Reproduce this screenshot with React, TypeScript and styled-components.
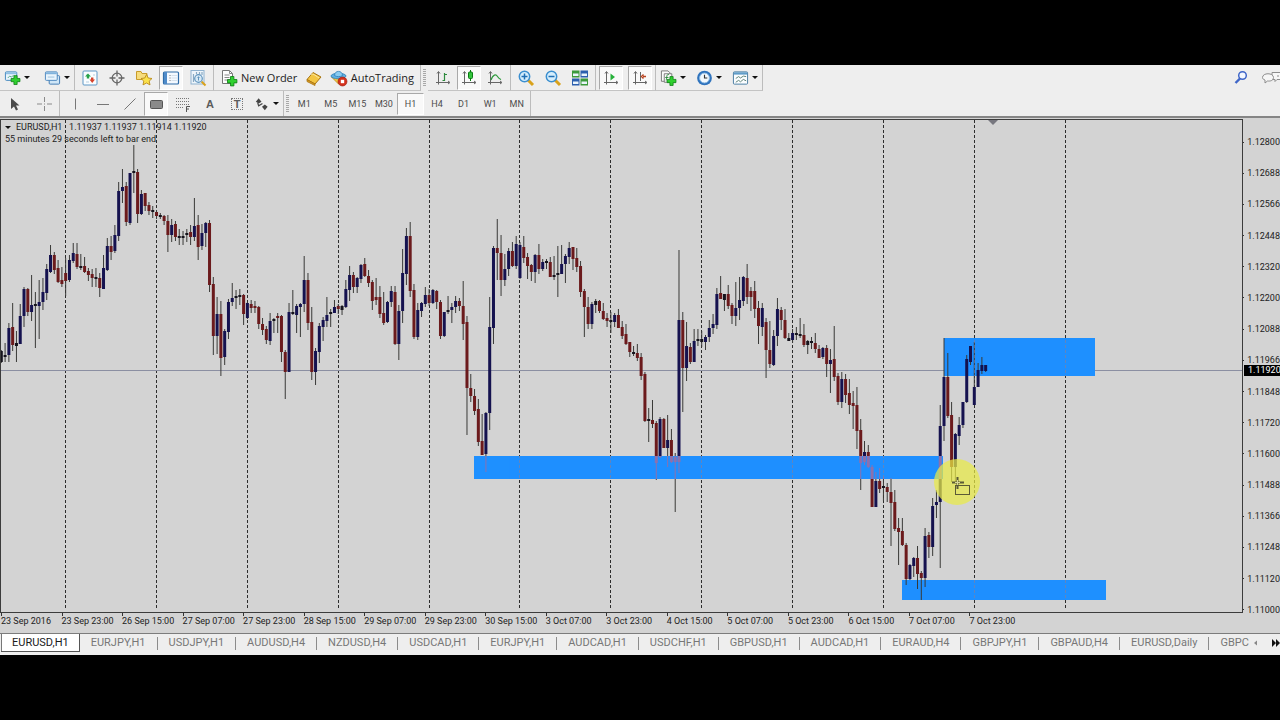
import React from "react";
import styled, { createGlobalStyle } from "styled-components";

const GlobalStyle = createGlobalStyle`
  * { box-sizing: border-box; }
  body { margin: 0; background: #000; font-family: Roboto, "Liberation Sans", sans-serif; }
  button { font-family: inherit; }
  ul, ol, p { margin: 0; padding: 0; list-style: none; }
`;

/* ---------- layout ---------- */

const Page = styled.main`
  display: flex;
  flex-direction: column;
  justify-content: center;
  min-height: 100vh;
  background: #000;
`;

const Terminal = styled.div`
  background: #eeeeee;
  overflow: hidden;
`;

const ToolRow = styled.div<{ $height: number }>`
  display: flex;
  align-items: stretch;
  height: ${(p) => p.$height}px;
`;

const Group = styled.div<{ $width: number; $underline?: boolean }>`
  display: flex;
  flex: none;
  align-items: center;
  justify-content: space-between;
  width: ${(p) => p.$width}px;
  padding: 0 3px;
  border-right: 1px solid #bcbcbc;
  border-bottom: ${(p) => (p.$underline ? "1px solid #c4c4c4" : "none")};
`;

const Grip = styled.span`
  flex: none;
  width: 3px;
  margin: 4px 2px;
  background: repeating-linear-gradient(#a8a8a8 0 1px, transparent 1px 2px);
`;

const ToolButton = styled.button<{ $active?: boolean; $wide?: boolean }>`
  display: flex;
  align-items: center;
  justify-content: center;
  gap: 3px;
  width: ${(p) => (p.$wide ? 28 : 24)}px;
  height: 24px;
  padding: 0;
  border: 1px solid;
  border-color: ${(p) => (p.$active ? "#a9a9a9 #fff #fff #a9a9a9" : "transparent")};
  background: ${(p) => (p.$active ? "#f9f9f9" : "transparent")};
`;

const LabelButton = styled.button`
  display: flex;
  align-items: center;
  gap: 3px;
  height: 24px;
  padding: 0 3px;
  border: 0;
  background: transparent;
  color: #1c1c1c;
  font: 11px "Open Sans", "Noto Sans", sans-serif;
  white-space: nowrap;
`;

const Caret = styled.span`
  border: 3px solid transparent;
  border-top-color: #111;
  border-bottom: 0;
`;

const Frames = styled.div`
  display: grid;
  grid-template-columns: repeat(9, 1fr);
  align-items: center;
  width: 240px;
  border-right: 1px solid #bcbcbc;
`;

const FrameButton = styled.button<{ $active?: boolean }>`
  height: 22px;
  padding: 0;
  border: 1px solid;
  border-color: ${(p) => (p.$active ? "#a9a9a9 #fff #fff #a9a9a9" : "transparent")};
  background: ${(p) => (p.$active ? "#f9f9f9" : "transparent")};
  color: #4c4c4c;
  font-size: 9px;
`;

const Corner = styled.div`
  display: flex;
  align-items: center;
  gap: 10px;
  margin: 0 -10px 0 auto;
`;

const CornerButton = styled.button`
  display: flex;
  padding: 0;
  border: 0;
  background: transparent;
`;

const ChartPane = styled.section`
  display: grid;
  grid-template-columns: minmax(0, 1fr) 37px;
  grid-template-rows: auto 20px;
  padding-top: 1px;
  border-top: 2px solid #858585;
  background: #d3d3d3;
`;

const Plot = styled.div`
  position: relative;
  border: 1px solid #3c3c3c;
`;

const Drawing = styled.svg`
  display: block;
  width: 100%;
  height: 492px;
`;

const Legend = styled.div`
  position: absolute;
  top: 1px;
  left: 4px;
  color: #222;
  font-size: 9px;
  line-height: 12px;
  white-space: pre;
`;

const LegendTitle = styled.p`
  display: flex;
  align-items: center;
  gap: 5px;
`;

const PriceAxis = styled.ol`
  position: relative;
  grid-row: 1 / 3;
  grid-column: 2;
  display: flex;
  flex-direction: column;
  justify-content: space-between;
  padding: 17px 0 17px;
  overflow: hidden;
`;

const Price = styled.li`
  display: flex;
  align-items: center;
  gap: 3px;
  height: 12px;
  color: #222;
  font-size: 9px;
  white-space: nowrap;
  &::before { content: ""; width: 2px; height: 1px; background: #333; }
`;

const Bid = styled.li`
  position: absolute;
  top: 246px;
  left: 1px;
  width: 36px;
  height: 11px;
  padding-left: 4px;
  background: #000;
  color: #fff;
  font-size: 9px;
  line-height: 11px;
`;

const TimeAxis = styled.ol`
  display: grid;
  grid-template-columns: repeat(17, 1fr);
  width: 1030px;
  padding-left: 1px;
`;

const Time = styled.li`
  color: #222;
  font-size: 9px;
  line-height: 11px;
  white-space: nowrap;
  &::before { content: ""; display: block; width: 1px; height: 3px; background: #333; }
`;

const TabStrip = styled.nav`
  display: flex;
  height: 22px;
  padding-left: 1px;
  border-top: 1px solid #7c7c7c;
`;

const TabList = styled.div`
  display: flex;
  flex: 1;
  min-width: 0;
  overflow: hidden;
`;

const Tab = styled.button<{ $active?: boolean }>`
  flex: none;
  height: 18px;
  padding: 0 11px;
  border: 0;
  background: ${(p) => (p.$active ? "#fff" : "transparent")};
  box-shadow: ${(p) => (p.$active ? "inset -1px -1px 0 #555, inset 1px 0 0 #777" : "none")};
  color: ${(p) => (p.$active ? "#1a1a1a" : "#777")};
  font-size: 11px;
  line-height: 18px;
`;

const Divider = styled.span`
  flex: none;
  width: 1px;
  height: 13px;
  margin-top: 3px;
  background: #8c8c8c;
`;

const TabScroll = styled.div`
  display: flex;
  flex: none;
  align-items: flex-start;
  justify-content: space-between;
  width: 30px;
  padding: 5px 0 0 3px;
`;

const ScrollButton = styled.button`
  display: flex;
  padding: 0;
  border: 0;
  background: transparent;
`;

/* ---------- icons ---------- */

const Plus = ({ x = 8, y = 8 }: { x?: number; y?: number }) => (
  <path
    transform={`translate(${x} ${y})`}
    d="M3 0h3.400v3h3v3.400H6.400v3H3v-3H0V3h3z"
    fill="#2fd02f"
    stroke="#0b7a12"
    strokeWidth=".8"
  />
);

const Axes = () => (
  <path d="M4.500 3v12.500M2 13.500h13.500M3 4.500l1.500-2 1.500 2M14 12l2 1.500-2 1.500" stroke="#666" fill="none" />
);

const Lens = ({ plus }: { plus?: boolean }) => (
  <>
    <path d="M11 11l5 5" stroke="#d9a21c" strokeWidth="3" />
    <circle cx="7.500" cy="7.500" r="5.200" fill="#d6eefc" stroke="#3b8fd0" strokeWidth="1.500" />
    <path d={plus ? "M4.500 7.500h6M7.500 4.500v6" : "M4.500 7.500h6"} stroke="#1f6fb5" strokeWidth="1.500" />
  </>
);

const glyphs: Record<string, React.ReactNode> = {
  newChart: (
    <>
      <rect x="1.500" y="2.500" width="12" height="9" rx="1" fill="#e9f4fc" stroke="#3f86bd" />
      <path d="M2 4h11" stroke="#8fc0e4" strokeWidth="2" />
      <path d="M4 9l2-2 2 1 2-2" stroke="#5a8" fill="none" />
      <Plus x={7.500} y={6.500} />
    </>
  ),
  profiles: (
    <>
      <rect x="5.500" y="6.500" width="11" height="9" rx="1" fill="#cfe6f7" stroke="#3f78b0" />
      <rect x="1.500" y="2.500" width="12.500" height="9" rx="1" fill="#e9f4fc" stroke="#4a86bd" />
      <path d="M2 4h11.500" stroke="#7fb2dc" strokeWidth="2" />
      <path d="M4 8h7" stroke="#9bbfdc" />
    </>
  ),
  market: (
    <>
      <rect x="2" y="2" width="14" height="14" rx="1" fill="#fafdff" stroke="#5d97c6" />
      <path d="M5 6h2M12 6h2M5 13h3" stroke="#b7cfe0" />
      <path d="M4 7.500L7 4.500l3 3H8.200V9.500H5.800V7.500z" fill="#27a34a" />
      <path d="M8.500 10.500h1.500V8.500h2.400v2h1.600L11.200 14z" fill="#d6422b" />
    </>
  ),
  target: (
    <g stroke="#666" fill="none" strokeWidth="1.300">
      <circle cx="9" cy="9" r="4.800" />
      <path d="M9 1.500v6M9 10.500v6M1.500 9h6M10.500 9h6" />
    </g>
  ),
  favourites: (
    <>
      <path d="M1.500 2.500h4.500l1 2h5v6h-10.500z" fill="#f6dc7c" stroke="#c89b2a" />
      <path
        d="M11.500 5.500l1.700 3.500 3.800.5-2.800 2.600.8 3.800-3.500-1.900-3.500 1.900.8-3.800-2.800-2.600 3.800-.5z"
        fill="#fbe14b"
        stroke="#b98a1b"
        strokeWidth=".9"
      />
    </>
  ),
  navigator: (
    <>
      <rect x="1.500" y="3" width="15" height="12" rx="1" fill="#f4f9ff" stroke="#2f6ca8" strokeWidth="1.200" />
      <path d="M2 3h3v12H2z" fill="#4f8bc9" />
      <path d="M7.500 6.500h1M7.500 9h1M7.500 11.500h1" stroke="#777" />
      <path d="M9.500 6.500h6M9.500 9h6M9.500 11.500h6" stroke="#d6e1ec" />
    </>
  ),
  tester: (
    <>
      <rect x="2" y="1.500" width="13" height="13.500" fill="#eef5fb" stroke="#8fb2cf" />
      <path d="M4.500 13V5M7.500 5V3M10.500 5V3M13 6V3" stroke="#8aa9c2" strokeWidth="1.200" />
      <path d="M12.500 12.500l4 4" stroke="#d9a21c" strokeWidth="2" />
      <circle cx="9.500" cy="9.500" r="3.800" fill="#d8eaf6" stroke="#5f93bd" strokeWidth="1.200" />
      <path d="M9.500 7.500v4M8.500 8.500h2" stroke="#5f93bd" />
    </>
  ),
  order: (
    <>
      <path d="M2.500 1.500h7l3 3v10h-10z" fill="#fdfdfd" stroke="#777" />
      <path d="M9.500 1.500v3h3M4.500 6h5M4.500 8.500h5M4.500 11h4" stroke="#888" fill="none" />
      <Plus x={7.500} y={7.500} />
    </>
  ),
  editor: (
    <>
      <path d="M2 10.500l6-7 8 4.500-6 7z" fill="#f3c542" stroke="#a87412" />
      <path d="M2 10.500l8 4.500v1.500L2 12.500z" fill="#d89c22" stroke="#a87412" strokeWidth=".8" />
      <path d="M6 5.500c2-1 3 0 8 3.500" stroke="#fbe9a6" fill="none" />
    </>
  ),
  auto: (
    <>
      <path d="M1.500 8l7 7 6-4V7z" fill="#f2c744" stroke="#b98a1b" strokeWidth=".8" />
      <ellipse cx="8.500" cy="7" rx="7.500" ry="2.800" fill="#5fb0e2" stroke="#2f7fb8" strokeWidth=".8" />
      <path d="M4.500 6.500c0-5.500 8-5.500 8 0-2 1.500-6 1.500-8 0z" fill="#8acbf0" stroke="#2f7fb8" strokeWidth=".8" />
      <circle cx="12.500" cy="12.500" r="4.500" fill="#d3301c" stroke="#9b1d10" strokeWidth=".6" />
      <rect x="10.800" y="10.800" width="3.400" height="3.400" fill="#fff" />
    </>
  ),
  bars: (
    <>
      <Axes />
      <path d="M10.500 4v8M8.500 11.500h2M10.500 5.500h2.500" stroke="#2d8a3c" fill="none" strokeWidth="1.200" />
    </>
  ),
  candles: (
    <>
      <Axes />
      <path d="M10.500 1v11" stroke="#0b7a12" />
      <rect x="8.500" y="3" width="4" height="6.500" rx="1" fill="#32c53c" stroke="#0b7a12" />
    </>
  ),
  line: (
    <>
      <Axes />
      <path d="M5 11c2-6 5-6 6.500-3.500S14 10 15 10.500" stroke="#2d9a3c" fill="none" strokeWidth="1.200" />
    </>
  ),
  zoomIn: <Lens plus />,
  zoomOut: <Lens />,
  tile: (
    <>
      <rect x="1" y="1.500" width="7.500" height="7" fill="#3c9a3c" />
      <rect x="9.500" y="1.500" width="7.500" height="7" fill="#2c5fae" />
      <rect x="1" y="9.500" width="7.500" height="7" fill="#2c5fae" />
      <rect x="9.500" y="9.500" width="7.500" height="7" fill="#3c9a3c" />
      <path d="M2 5.800h5.500M10.500 5.800h5.500M2 13.800h5.500M10.500 13.800h5.500" stroke="#eaf4fb" strokeWidth="2.600" />
    </>
  ),
  scroll: (
    <>
      <Axes />
      <path d="M8.500 4.500l4.500 3.500-4.500 3.500z" fill="#27b13a" />
    </>
  ),
  shift: (
    <>
      <Axes />
      <path d="M9.500 3v9" stroke="#666" />
      <path d="M15 7.500h-3M12.500 5.500l-2 2 2 2" stroke="#b8431f" fill="none" strokeWidth="1.400" />
    </>
  ),
  indicators: (
    <>
      <path d="M1.500 1.500h7l2 2v9h-9z" fill="#fafafa" stroke="#777" />
      <path d="M4.500 4.500h8v9h-8z" fill="#fafafa" stroke="#777" />
      <path d="M9.500 5.500c-3-1-2 3-3 6M5.500 8.500h3.500" stroke="#2d8a3c" fill="none" />
      <Plus x={7.500} y={7.500} />
    </>
  ),
  clock: (
    <>
      <circle cx="9" cy="9" r="7.800" fill="#2f73bd" />
      <circle cx="9" cy="9" r="5.200" fill="#f2f8fd" stroke="#8dbbe4" />
      <path d="M9 5.500V9h3" stroke="#333" fill="none" strokeWidth="1.200" />
    </>
  ),
  templates: (
    <>
      <rect x="1.500" y="2.500" width="15" height="13" rx="1" fill="#fbfdff" stroke="#44799f" />
      <path d="M2 4.200h14" stroke="#5f9cc8" strokeWidth="2.400" />
      <path d="M4 9.500l3-2 2 1.500 3-2 3 .5M4 13.500l3-2 2 1.500 3-2.500 3 1.500" stroke="#5a7f74" fill="none" />
    </>
  ),
  cursor: <path d="M5 3l8.500 7.500H10l2 4-2 1-2-4L5 14z" fill="#4a4a4a" />,
  cross: <path d="M9.500 2v5M9.500 11v5M2 9h5M12 9h5M9 9h1" stroke="#8a8a8a" />,
  vertical: <path d="M9.500 3.500v11" stroke="#777" />,
  horizontal: <path d="M4 9.500h12" stroke="#777" />,
  trend: <path d="M4.500 14.500L15.500 3.500" stroke="#777" />,
  rectangle: <rect x="3.500" y="5.500" width="12" height="8" rx="1" fill="#8a8a8a" stroke="#555" />,
  fibonacci: (
    <>
      <path d="M2 3.500h13M2 6.500h13M2 9.500h13M2 12.500h8" stroke="#777" strokeDasharray="1 1" />
      <path d="M12.500 17v-5.500H16M12.500 14H15" stroke="#555" fill="none" />
    </>
  ),
  arrows: (
    <>
      <path d="M3 6.500L6 3l3 3.500L6 8.500z" fill="#444" />
      <path d="M5 8l1 3 4-2.500" stroke="#444" fill="none" strokeWidth="1.300" />
      <path d="M9.500 12l3-2.500 3 2.500-3 3.500z" fill="#444" />
    </>
  ),
};

const Icon = ({ name }: { name: string }) => (
  <svg width="18" height="18" viewBox="0 0 18 18" aria-hidden="true">
    {glyphs[name]}
  </svg>
);

const LetterIcon = styled.span<{ $boxed?: boolean }>`
  width: 12px;
  height: 12px;
  border: ${(p) => (p.$boxed ? "1px dotted #777" : "0")};
  color: #5c5c5c;
  font: bold 11px "Liberation Sans", sans-serif;
  line-height: ${(p) => (p.$boxed ? 11 : 13)}px;
`;

const Tool = ({ icon, label, active }: { icon: string; label: string; active?: boolean }) => (
  <ToolButton $active={active} aria-label={label} aria-pressed={active}>
    <Icon name={icon} />
  </ToolButton>
);

const MenuTool = ({ icon, label }: { icon: string; label: string }) => (
  <ToolButton $wide aria-label={label} aria-haspopup="menu">
    <Icon name={icon} />
    <Caret />
  </ToolButton>
);

/* ---------- data ---------- */

// One candle per hour: high, body top, body bottom, low (plot pixels) and colour
// (n = up, r = down, k = doji).
const candleText = `
230 231 242 243 k,223 235 237 242 k,203 208 235 242 n,183 207 225 231 r,211 223 226 242 k,184 196 224 224 n,167 169 196 207 n,168 169 192 196 r,
155 185 192 201 n,172 184 186 228 k,160 182 186 219 n,158 172 182 190 n,144 149 173 180 n,125 135 152 153 n,132 135 150 154 r,140 148 162 163 r,
147 160 164 167 r,138 153 161 176 r,135 140 160 162 n,123 133 141 143 n,123 134 147 149 r,134 146 147 150 k,137 146 152 153 r,148 151 155 161 r,
149 154 158 167 r,148 157 159 167 k,153 158 168 177 r,135 148 169 169 n,118 126 150 151 n,116 126 132 140 r,105 115 131 133 n,62 71 116 121 n,
49 67 71 83 n,62 66 102 106 r,53 53 103 105 n,25 51 53 73 k,49 52 94 103 r,70 74 94 95 n,73 73 86 91 r,82 85 91 95 r,
86 90 92 98 k,90 92 96 99 r,93 95 96 99 k,95 96 101 105 r,95 101 115 132 r,99 105 115 122 n,101 104 117 121 r,109 116 118 125 k,
111 116 118 125 k,109 113 115 122 k,105 112 117 125 r,78 106 117 121 n,95 105 127 140 r,104 113 126 130 n,102 103 113 127 n,100 103 165 172 r,
157 164 216 235 r,177 194 216 234 n,181 194 238 256 r,209 211 237 245 n,179 182 212 219 n,163 178 182 186 n,170 176 178 189 k,169 175 177 185 k,
174 175 194 205 r,182 183 198 199 n,180 184 188 193 r,181 186 188 193 r,186 187 204 209 r,198 204 210 215 r,206 209 220 224 r,193 201 221 225 n,
198 199 201 213 k,193 196 198 213 r,195 196 232 242 r,230 232 252 279 r,183 192 252 252 n,170 192 194 195 k,184 186 195 213 n,183 184 187 217 n,
136 160 184 192 n,153 160 203 210 r,187 202 252 260 r,228 231 252 265 n,203 206 232 243 n,197 200 207 221 n,177 195 201 207 n,189 192 194 207 k,
180 187 193 193 n,184 186 189 194 r,185 186 190 195 k,160 169 187 188 n,146 155 170 181 n,152 155 167 173 r,157 158 167 173 n,144 145 159 163 n,
138 144 156 157 r,150 156 163 167 r,160 162 181 190 r,158 177 180 185 r,166 177 194 198 r,172 193 203 205 r,181 182 202 203 n,166 171 182 187 n,
166 172 224 225 r,185 191 224 240 n,129 153 191 203 n,108 116 154 165 n,102 116 171 177 r,164 170 217 219 r,183 190 217 220 n,182 183 191 197 n,
167 175 184 187 n,169 175 183 186 r,169 170 183 184 n,170 171 182 189 r,180 182 216 219 r,192 192 216 217 n,176 190 192 194 k,183 187 190 203 n,
176 181 187 193 n,178 181 186 191 r,161 186 204 220 r,196 202 268 315 r,254 268 276 282 r,269 276 291 295 r,279 289 322 326 r,294 321 335 335 r,
292 293 334 352 n,177 207 293 310 n,126 128 208 224 n,99 128 133 160 r,115 133 160 176 r,134 149 160 166 n,128 131 149 156 n,122 131 146 147 r,
116 124 146 149 n,122 125 158 159 n,116 127 138 143 r,133 137 146 159 r,144 145 152 161 r,134 135 152 163 n,124 135 149 154 r,139 142 149 151 n,
139 141 143 149 k,137 142 157 157 r,136 155 157 160 k,126 153 155 177 k,125 144 154 154 n,134 136 144 163 n,122 128 137 144 n,127 127 139 150 r,
128 138 147 152 r,141 146 172 177 r,169 171 187 217 r,177 187 204 209 r,182 184 204 209 n,179 181 185 193 k,180 181 191 193 r,183 191 199 200 r,
193 198 201 207 r,192 200 202 213 k,193 195 202 207 n,189 195 208 208 r,201 207 216 219 r,204 214 224 225 r,222 222 232 237 r,226 232 234 236 k,
224 233 238 241 r,233 237 256 260 r,252 254 301 302 r,288 299 301 322 k,280 300 304 308 r,301 303 343 360 r,297 299 337 338 n,298 299 328 328 r,
295 320 328 347 n,309 320 342 343 r,333 337 342 392 r,130 200 342 353 n,192 200 248 292 r,202 226 248 261 n,223 227 242 244 r,209 221 242 242 n,
209 219 221 226 k,211 219 222 227 k,215 217 222 230 n,200 208 217 222 n,194 204 208 214 n,168 174 205 209 n,156 173 179 179 r,174 174 180 191 k,
165 174 186 189 r,183 185 196 204 r,162 188 196 206 n,157 180 188 200 n,156 157 181 186 n,144 158 177 184 r,167 171 177 191 r,161 171 189 198 r,
181 188 206 224 r,183 188 207 216 n,198 202 230 258 r,201 230 244 248 r,210 216 245 246 n,178 189 216 226 n,187 190 200 210 r,189 200 218 219 r,
213 218 221 221 k,209 213 220 223 n,207 213 215 220 k,198 214 216 218 k,204 215 225 227 r,220 221 225 234 k,217 221 223 229 k,213 223 229 233 r,
225 229 238 238 r,227 228 237 239 n,225 228 244 257 r,229 240 244 273 n,206 239 257 261 r,253 256 282 285 r,252 259 282 288 n,254 259 275 283 r,
259 273 285 294 r,271 283 286 309 r,267 285 311 329 r,299 310 343 370 r,321 332 342 345 n,325 332 347 348 r,345 347 387 387 r,352 361 387 387 n,
348 361 369 373 r,357 366 368 381 k,363 367 372 382 r,358 372 383 426 r,370 382 409 411 r,398 408 412 445 r,398 411 425 426 r,423 425 459 465 r,
444 445 459 460 n,437 438 446 457 n,426 438 454 469 r,451 453 458 480 r,408 416 458 467 n,412 415 427 438 r,378 386 427 436 n,370 382 385 398 n,
285 306 382 448 n,218 257 306 321 n,233 257 296 298 r,282 295 347 362 r,313 314 347 363 n,297 305 316 325 n,282 282 305 308 n,235 239 282 283 n,
226 226 242 245 n,222 267 285 285 n,243 250 267 267 n,237 245 251 254 n,245 245 251 252 n`;

const candles = candleText.split(",").map((row) => {
  const [high, top, bottom, low, kind] = row.trim().split(" ");
  return { high: +high, top: +top, bottom: +bottom, low: +low, kind };
});

const START = 0.3;
const STEP = 3.786;
const bodyColour: Record<string, string> = { n: "#15124f", r: "#6b1a1c", k: "#15131c" };
const dayLines = Array.from({ length: 12 }, (_, day) => Math.floor(START + STEP * (17 + day * 24)) + 0.5);

const prices = [
  "1.12800", "1.12688", "1.12566", "1.12448", "1.12320", "1.12200", "1.12088", "1.11966",
  "1.11848", "1.11720", "1.11600", "1.11488", "1.11366", "1.11248", "1.11120", "1.11000",
];

const times = [
  "23 Sep 2016", "23 Sep 23:00", "26 Sep 15:00", "27 Sep 07:00", "27 Sep 23:00", "28 Sep 15:00",
  "29 Sep 07:00", "29 Sep 23:00", "30 Sep 15:00", "3 Oct 07:00", "3 Oct 23:00", "4 Oct 15:00",
  "5 Oct 07:00", "5 Oct 23:00", "6 Oct 15:00", "7 Oct 07:00", "7 Oct 23:00",
];

const tabs = [
  "EURUSD,H1", "EURJPY,H1", "USDJPY,H1", "AUDUSD,H4", "NZDUSD,H4", "USDCAD,H1", "EURJPY,H1", "AUDCAD,H1",
  "USDCHF,H1", "GBPUSD,H1", "AUDCAD,H1", "EURAUD,H4", "GBPJPY,H1", "GBPAUD,H4", "EURUSD,Daily", "GBPC",
];

const timeframes = ["M1", "M5", "M15", "M30", "H1", "H4", "D1", "W1", "MN"];

/* ---------- chart ---------- */

const Candles = ({ tint }: { tint?: string }) => (
  <g>
    {candles.map((c, i) => {
      const x = START + i * STEP;
      return (
        <g key={i}>
          <rect x={x - 0.5} y={c.high} width="1" height={c.low - c.high} fill={tint ?? "#3a3a38"} />
          <rect
            x={x - 1.5}
            y={c.top}
            width="3"
            height={Math.max(c.bottom - c.top, 2)}
            fill={tint ?? bodyColour[c.kind]}
          />
        </g>
      );
    })}
  </g>
);

const DayLines = ({ colour }: { colour: string }) => (
  <g stroke={colour} strokeDasharray="3 2">
    {dayLines.map((x) => (
      <line key={x} x1={x} x2={x} y1="0" y2="490" />
    ))}
  </g>
);

const Chart = () => (
  <Drawing role="img" aria-label="EURUSD hourly candlestick chart">
    <defs>
      <clipPath id="support">
        <rect x="473" y="336" width="469" height="23" />
      </clipPath>
      <clipPath id="zones">
        <rect x="943" y="218" width="151" height="38" />
        <rect x="901" y="460" width="204" height="20" />
        <rect x="473" y="336" width="469" height="23" />
      </clipPath>
    </defs>
    <DayLines colour="#2c2c2c" />
    <line x1="0" x2="100%" y1="250.500" y2="250.500" stroke="#8b8fa2" />
    <g fill="#1e90ff">
      <rect x="943" y="218" width="151" height="38" />
      <rect x="901" y="460" width="204" height="20" />
    </g>
    <Candles />
    <rect x="473" y="336" width="469" height="23" fill="#1e90ff" />
    <g clipPath="url(#zones)" opacity=".6">
      <DayLines colour="#8a7f94" />
    </g>
    <g clipPath="url(#support)" opacity=".75">
      <Candles tint="#b06894" />
    </g>
    <path d="M987 0h10l-5 5z" fill="#77777f" />
    <circle cx="956" cy="362" r="23" fill="#e9ea45" opacity=".72" />
    <g fill="none" stroke="#5b5a36">
      <rect x="954.500" y="365.500" width="14" height="9" />
      <path d="M956.500 357v12M951 362.500h12" strokeWidth="2" />
      <path d="M956.500 360v5M954 362.500h5" stroke="#d8d89a" />
    </g>
  </Drawing>
);

/* ---------- page ---------- */

export default function App() {
  return (
    <Page>
      <GlobalStyle />
      <Terminal>
        <ToolRow $height={26}>
          <Group $width={75} $underline>
            <MenuTool icon="newChart" label="New chart" />
            <MenuTool icon="profiles" label="Profiles" />
          </Group>
          <Group $width={139} $underline>
            <Tool icon="market" label="Market Watch" />
            <Tool icon="target" label="Data Window" />
            <Tool icon="favourites" label="Favourites" />
            <Tool icon="navigator" label="Navigator" active />
            <Tool icon="tester" label="Strategy Tester" />
          </Group>
          <Group $width={207} $underline>
            <LabelButton>
              <Icon name="order" />
              New Order
            </LabelButton>
            <Tool icon="editor" label="MetaEditor" />
            <LabelButton>
              <Icon name="auto" />
              AutoTrading
            </LabelButton>
          </Group>
          <Grip />
          <Group $width={83} $underline>
            <Tool icon="bars" label="Bar chart" />
            <Tool icon="candles" label="Candlesticks" active />
            <Tool icon="line" label="Line chart" />
          </Group>
          <Group $width={85} $underline>
            <Tool icon="zoomIn" label="Zoom in" />
            <Tool icon="zoomOut" label="Zoom out" />
            <Tool icon="tile" label="Tile windows" />
          </Group>
          <Group $width={60} $underline>
            <Tool icon="scroll" label="Auto scroll" active />
            <Tool icon="shift" label="Chart shift" active />
          </Group>
          <Group $width={107} $underline>
            <MenuTool icon="indicators" label="Indicators" />
            <MenuTool icon="clock" label="Periods" />
            <MenuTool icon="templates" label="Templates" />
          </Group>
          <Corner>
            <CornerButton aria-label="Search">
              <svg width="18" height="18" viewBox="0 0 18 18" aria-hidden="true">
                <circle cx="10.500" cy="6.500" r="3.800" fill="#f4f8ff" stroke="#3f66c8" strokeWidth="1.500" />
                <path d="M8 9.500l-4.500 4.500" stroke="#3f66c8" strokeWidth="2.400" />
              </svg>
            </CornerButton>
            <CornerButton aria-label="Messages">
              <svg width="30" height="18" viewBox="0 0 30 18" aria-hidden="true">
                <g fill="#f6f6f6" stroke="#8c8c8c">
                  <path d="M12 3.500h18v7H17l-2 2v-2h-3z" />
                  <path d="M2.500 8.500c0-5 11-5 11 0 0 3-3 3.800-6 3.500l-2.500 2V11c-1.500-.5-2.500-1.200-2.500-2.500z" />
                  <path d="M17 7h12" strokeDasharray="2 1" />
                </g>
              </svg>
            </CornerButton>
          </Corner>
        </ToolRow>

        <ToolRow $height={25}>
          <Group $width={60}>
            <Tool icon="cursor" label="Cursor" />
            <Tool icon="cross" label="Crosshair" />
          </Group>
          <Group $width={224}>
            <Tool icon="vertical" label="Vertical line" />
            <Tool icon="horizontal" label="Horizontal line" />
            <Tool icon="trend" label="Trendline" />
            <Tool icon="rectangle" label="Rectangle" active />
            <Tool icon="fibonacci" label="Fibonacci retracement" />
            <ToolButton aria-label="Text">
              <LetterIcon>A</LetterIcon>
            </ToolButton>
            <ToolButton aria-label="Text label">
              <LetterIcon $boxed>T</LetterIcon>
            </ToolButton>
            <MenuTool icon="arrows" label="Arrows" />
          </Group>
          <Grip />
          <Frames>
            {timeframes.map((name) => (
              <FrameButton key={name} $active={name === "H1"}>
                {name}
              </FrameButton>
            ))}
          </Frames>
        </ToolRow>

        <ChartPane>
          <Plot>
            <Chart />
            <Legend>
              <LegendTitle>
                <Caret />
                {"EURUSD,H1   1.11937 1.11937 1.11914 1.11920"}
              </LegendTitle>
              <p>55 minutes 29 seconds left to bar end</p>
            </Legend>
          </Plot>
          <PriceAxis>
            {prices.map((price) => (
              <Price key={price}>{price}</Price>
            ))}
            <Bid>1.11920</Bid>
          </PriceAxis>
          <TimeAxis>
            {times.map((time) => (
              <Time key={time}>{time}</Time>
            ))}
          </TimeAxis>
        </ChartPane>

        <TabStrip aria-label="Charts">
          <TabList>
            {tabs.map((name, i) => (
              <React.Fragment key={i}>
                {i > 1 && <Divider />}
                <Tab $active={i === 0}>{name}</Tab>
              </React.Fragment>
            ))}
          </TabList>
          <TabScroll>
            <ScrollButton aria-label="Scroll tabs left">
              <svg width="6" height="8" viewBox="0 0 6 8" aria-hidden="true">
                <path d="M4 1.500v5L1 4z" fill="#888" />
              </svg>
            </ScrollButton>
            <ScrollButton aria-label="Scroll tabs right">
              <svg width="9" height="8" viewBox="0 0 9 8" aria-hidden="true">
                <path d="M1 0v8l4-4zM5 0v8l4-4z" fill="#111" />
              </svg>
            </ScrollButton>
          </TabScroll>
        </TabStrip>
      </Terminal>
    </Page>
  );
}
